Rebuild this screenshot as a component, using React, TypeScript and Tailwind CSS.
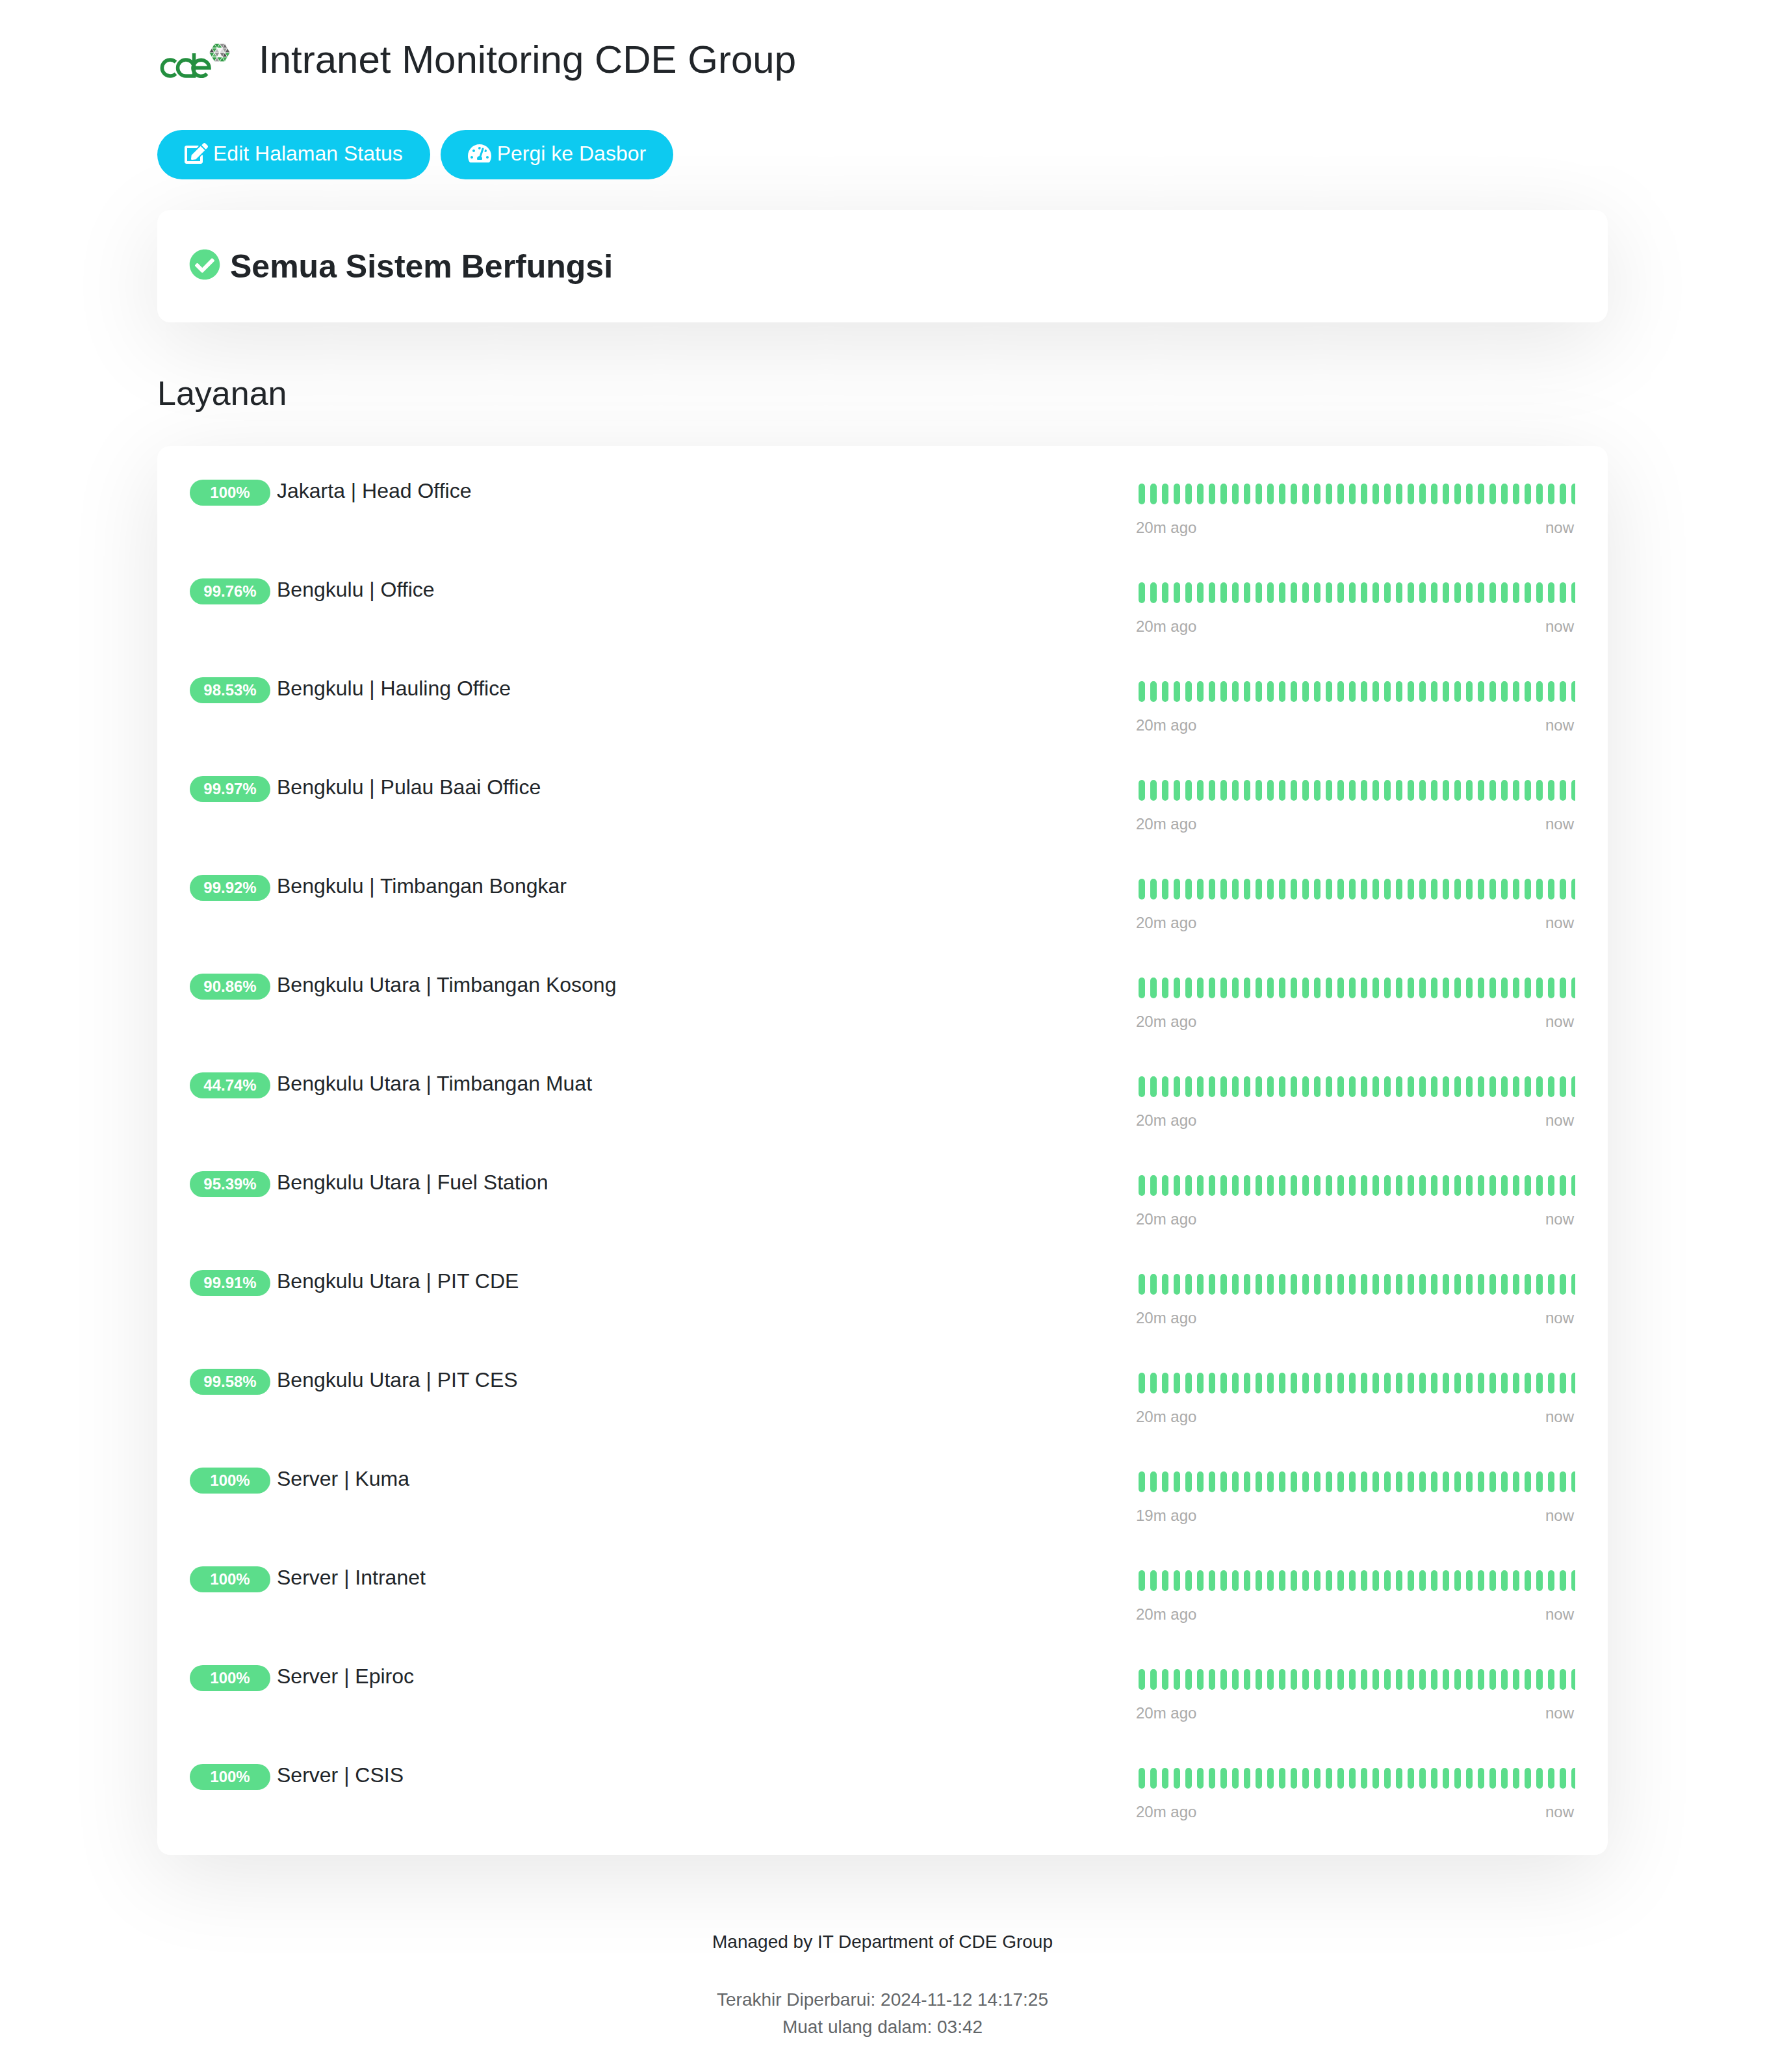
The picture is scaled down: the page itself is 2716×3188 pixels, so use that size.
import { FaEdit, FaTachometerAlt, FaCheckCircle } from "react-icons/fa";

const services: [string, string, string?][] = [
  ["100%", "Jakarta | Head Office"],
  ["99.76%", "Bengkulu | Office"],
  ["98.53%", "Bengkulu | Hauling Office"],
  ["99.97%", "Bengkulu | Pulau Baai Office"],
  ["99.92%", "Bengkulu | Timbangan Bongkar"],
  ["90.86%", "Bengkulu Utara | Timbangan Kosong"],
  ["44.74%", "Bengkulu Utara | Timbangan Muat"],
  ["95.39%", "Bengkulu Utara | Fuel Station"],
  ["99.91%", "Bengkulu Utara | PIT CDE"],
  ["99.58%", "Bengkulu Utara | PIT CES"],
  ["100%", "Server | Kuma", "19m ago"],
  ["100%", "Server | Intranet"],
  ["100%", "Server | Epiroc"],
  ["100%", "Server | CSIS"],
];

const beats = Array.from({ length: 38 }, (_, i) => i);

// Triangular lattice of the hexagon emblem in the logo.
const hexCx = 96;
const hexCy = 25;
const side = 8;
const h = (side * Math.sqrt(3)) / 2;
const hexColors = [
  "#3a9e4c", "#2f9a45", "#43ae57", "#8f8f8f", "#6d6d6d", "#4c4c4c",
  "#3ea552", "#b9b9b9", "#f2f2f2", "#d9d9d9", "#9a9a9a", "#585858",
  "#2f9a45", "#6cbd78", "#8f8f8f", "#f7f7f7", "#7a7a7a", "#4c4c4c",
  "#43ae57", "#2f9a45", "#9a9a9a", "#3a9e4c", "#2f9a45", "#43ae57",
];
const hexTriangles: string[] = [];
for (let row = 0; row < 4; row++) {
  const y0 = hexCy - 2 * h + row * h;
  const topW = row < 2 ? 2 + row : 4 - (row - 2);
  const botW = row < 2 ? 3 + row : 3 - (row - 2);
  const xTop0 = hexCx - (topW * side) / 2;
  const xBot0 = hexCx - (botW * side) / 2;
  if (row < 2) {
    for (let i = 0; i <= topW; i++) {
      hexTriangles.push(`${xTop0 + i * side},${y0} ${xBot0 + i * side},${y0 + h} ${xBot0 + (i + 1) * side},${y0 + h}`);
      if (i < topW) hexTriangles.push(`${xTop0 + i * side},${y0} ${xTop0 + (i + 1) * side},${y0} ${xBot0 + (i + 1) * side},${y0 + h}`);
    }
  } else {
    for (let i = 0; i <= botW; i++) {
      hexTriangles.push(`${xBot0 + i * side},${y0 + h} ${xTop0 + i * side},${y0} ${xTop0 + (i + 1) * side},${y0}`);
      if (i < botW) hexTriangles.push(`${xBot0 + i * side},${y0 + h} ${xBot0 + (i + 1) * side},${y0 + h} ${xTop0 + (i + 1) * side},${y0}`);
    }
  }
}

function Logo() {
  return (
    <svg viewBox="0 0 120 72" className="w-[120px] h-[72px] shrink-0 mr-[36px]">
      <g fill="none" stroke="#248f3f" strokeWidth="5.5" transform="translate(1.5 0)">
        <path d="M27 39.5 A12.5 12.5 0 1 0 27 57.5" />
        <path d="M55 48.5 A12.5 12.5 0 1 0 42.5 61 H55 V26" />
        <path d="M54 48.5 H78.5 A12.5 12.5 0 1 0 75 57.5" />
      </g>
      <g>
        {hexTriangles.map((p, i) => (
          <polygon key={i} points={p} fill={hexColors[i % hexColors.length]} stroke="#ffffff" strokeWidth="0.7" />
        ))}
      </g>
    </svg>
  );
}

function Row({ pct, name, ago }: { pct: string; name: string; ago: string }) {
  return (
    <div className="flex justify-between h-[144px]">
      <div className="flex items-start text-[32px] leading-[48px] text-[#212529]">
        <span className="mt-[6px] mr-[10px] w-[124px] h-[40px] rounded-full bg-[#5cdd8b] text-white text-[24px] leading-[40px] font-bold text-center">
          {pct}
        </span>
        <span className="-mt-[1px]">{name}</span>
      </div>
      <div className="w-[676px]">
        <div className="flex gap-[8px] mt-[12px] pl-[4px] overflow-hidden">
          {beats.map((b) => (
            <div key={b} className="w-[10px] h-[32px] shrink-0 rounded-full bg-[#5cdd8b]" />
          ))}
        </div>
        <div className="flex justify-between mt-[18px] pr-[2px] text-[24px] leading-[36px] text-[#aaaaaa]">
          <span>{ago}</span>
          <span>now</span>
        </div>
      </div>
    </div>
  );
}

export default function App() {
  return (
    <div className="bg-white font-['Liberation_Sans',Arial,sans-serif] text-[#212529]">
      <div className="w-[2232px] mx-auto pt-[56px] pb-[48px]">
        <header className="flex items-center h-[72px]">
          <Logo />
          <h1 className="text-[60px] leading-[72px] font-normal">Intranet Monitoring CDE Group</h1>
        </header>

        <div className="flex gap-[16px] mt-[72px]">
          <button className="flex items-center h-[76px] px-[42px] pb-[4px] rounded-full bg-[#0dcaf0] text-white text-[32px]">
            <FaEdit className="w-[36px] h-[32px] mr-[8px]" />
            Edit Halaman Status
          </button>
          <button className="flex items-center h-[76px] px-[42px] pb-[4px] rounded-full bg-[#0dcaf0] text-white text-[32px]">
            <FaTachometerAlt className="w-[36px] h-[32px] mr-[9px]" />
            Pergi ke Dasbor
          </button>
        </div>

        <section className="flex items-center mt-[47px] h-[173px] pl-[49px] rounded-[20px] bg-white shadow-[0_30px_140px_rgba(0,0,0,0.1)]">
          <FaCheckCircle className="w-[48px] h-[48px] mb-[6px] mr-[15px] text-[#5cdd8b]" />
          <h2 className="text-[50px] leading-[60px] font-bold">Semua Sistem Berfungsi</h2>
        </section>

        <h2 className="mt-[76px] mb-[48px] text-[52px] leading-[66px] font-normal">Layanan</h2>

        <section className="flex flex-col gap-[8px] pt-[46px] pb-[2px] px-[50px] rounded-[20px] bg-white shadow-[0_30px_140px_rgba(0,0,0,0.1)]">
          {services.map(([pct, name, ago]) => (
            <Row key={name} pct={pct} name={name} ago={ago ?? "20m ago"} />
          ))}
        </section>

        <footer className="mt-[113px] text-center text-[28px] leading-[42px]">
          <p>Managed by IT Department of CDE Group</p>
          <p className="mt-[47px] text-[#212529] opacity-70">Terakhir Diperbarui: 2024-11-12 14:17:25</p>
          <p className="text-[#212529] opacity-70">Muat ulang dalam: 03:42</p>
        </footer>
      </div>
    </div>
  );
}
